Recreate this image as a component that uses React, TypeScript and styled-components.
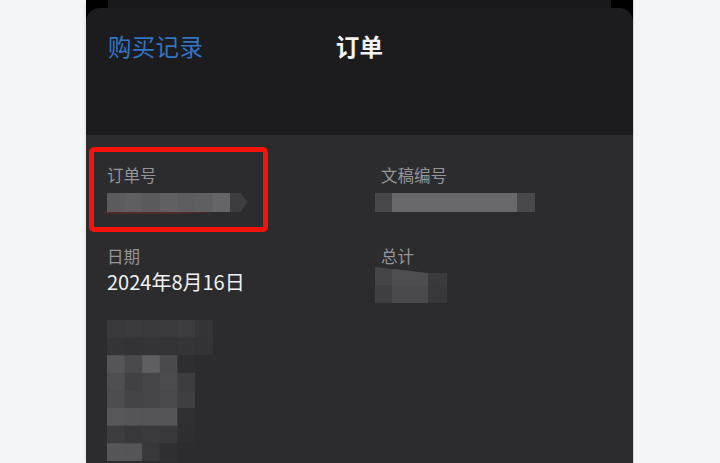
import React from "react";
import styled, { createGlobalStyle } from "styled-components";

const Global = createGlobalStyle`
  html, body { margin: 0; padding: 0; background: #f4f5f7; }
  body { font-family: "Noto Sans CJK SC", "Noto Sans", sans-serif; }
`;

const Page = styled.div`
  width: 720px;
  height: 463px;
  display: flex;
  background: #f4f5f7;
  overflow: hidden;
`;

const Phone = styled.div`
  margin-left: 86px;
  width: 547px;
  height: 463px;
  background: #000;
  display: flex;
  flex-direction: column;
  border-right: 1px solid #d6d7d9;
  box-shadow: -3px 0 3px -2px rgba(0, 0, 0, 0.08);
  overflow: hidden;
`;

const BackSheet = styled.div`
  flex-shrink: 0;
  height: 8px;
  margin: 0 22px;
  background: #19191b;
`;

const Sheet = styled.div`
  flex: 1;
  min-height: 0;
  display: flex;
  flex-direction: column;
  background: #1c1c1e;
  border-radius: 14px 14px 0 0;
  overflow: hidden;
`;

const Header = styled.div`
  flex-shrink: 0;
  height: 127px;
  display: flex;
  flex-direction: column;
`;

const NavBar = styled.div`
  height: 76px;
  display: grid;
  grid-template-columns: 1fr auto 1fr;
  align-items: center;
  padding: 0 22px;
`;

const BackLink = styled.span`
  font-size: 23.5px;
  color: #3274c6;
  letter-spacing: 0.3px;
  justify-self: start;
`;

const Title = styled.span`
  font-size: 23.5px;
  font-weight: 600;
  color: #f2f2f4;
  letter-spacing: 0.3px;
`;

const Content = styled.div`
  position: relative;
  flex: 1 0 auto;
  background: #2c2c2e;
  padding: 29px 21px 0;
`;

const Fields = styled.div`
  display: grid;
  grid-template-columns: 274px 1fr;
  row-gap: 31px;
`;

const Field = styled.div`
  display: flex;
  flex-direction: column;
`;

const Label = styled.span`
  font-size: 16.5px;
  line-height: 22px;
  color: #949499;
`;

const Value = styled.span`
  font-size: 20px;
  line-height: 28px;
  margin-top: 1px;
  color: #f2f2f4;
`;

const Mosaic = styled.svg<{ $shift?: number; $top?: number }>`
  display: block;
  flex-shrink: 0;
  margin-left: ${(p) => p.$shift ?? 0}px;
  margin-top: ${(p) => p.$top ?? 0}px;
`;

const Highlight = styled.div`
  position: absolute;
  left: 3px;
  top: 12px;
  width: 179px;
  height: 85px;
  box-sizing: border-box;
  border: 5px solid #f4140c;
  border-radius: 5px;
`;

const C = 17.6;

const orderCells = ["#5b5b5d", "#5f5f61", "#5a5a5c", "#616163", "#5d5d5f", "#5f5f61", "#656567"];

const OrderBar = () => (
  <Mosaic width={142} height={21} $shift={-2} $top={7}>
    <path d="M0 19.5 Q60 21 110 18" stroke="#7a2a2a" strokeWidth={2} fill="none" opacity={0.5} />
    {orderCells.map((c, i) => (
      <rect key={i} x={i * C + 2} y={0} width={C + 0.5} height={19} fill={c} />
    ))}
    <path d="M125 0 L136 0 L142 9 L136 19 L125 19 Z" fill="#3d3d40" />
  </Mosaic>
);

const DocBar = () => (
  <Mosaic width={160} height={19} $shift={-6} $top={7}>
    <rect x={0} y={0} width={18} height={19} fill="#48484b" />
    <rect x={17} y={0} width={126} height={19} fill="#69696b" />
    <rect x={142} y={0} width={18} height={19} fill="#49494c" />
  </Mosaic>
);

const TotalBlocks = () => (
  <Mosaic width={72} height={36} $shift={-6} $top={0}>
    <path d="M0 0 L36 4 L36 18 L0 18 Z" fill="#454548" />
    <path d="M17 2 L53 6 L53 18 L17 18 Z" fill="#4e4e51" />
    <rect x={53} y={6} width={19} height={12} fill="#3a3a3d" />
    <rect x={0} y={18} width={17} height={18} fill="#404043" />
    <rect x={17} y={18} width={36} height={18} fill="#4a4a4d" />
    <rect x={53} y={18} width={19} height={18} fill="#38383b" />
  </Mosaic>
);

const grid: string[][] = [
  ["#3a3a3d", "#3b3b3f", "#3a3a3e", "#3b3b3f", "#3c3c40", "#353538"],
  ["#353538", "#333336", "#343437", "#343437", "#353538", "#333336"],
  ["#565658", "#4a4a4d", "#5f5f61", "#4b4b4e", "#2e2e30", "#2c2c2e"],
  ["#4f4f52", "#414144", "#464649", "#4c4c4f", "#3d3d40", "#2c2c2e"],
  ["#4d4d50", "#444447", "#464649", "#4a4a4d", "#3f3f42", "#2c2c2e"],
  ["#58585a", "#555558", "#555558", "#555558", "#303033", "#2c2c2e"],
  ["#3d3d40", "#38383b", "#3b3b3e", "#39393c", "#2e2e30", "#2c2c2e"],
  ["#565659", "#555558", "#38383b", "#2f2f32", "#2c2c2e", "#2c2c2e"],
];

const BlurBlock = () => (
  <Mosaic width={C * 6} height={C * 8} $top={17}>
    {grid.map((row, r) =>
      row.map((c, i) => (
        <rect key={`${r}-${i}`} x={i * C} y={r * C} width={C + 0.5} height={C + 0.5} fill={c} />
      ))
    )}
  </Mosaic>
);

export default function App() {
  return (
    <>
      <Global />
      <Page>
        <Phone>
          <BackSheet />
          <Sheet>
            <Header>
              <NavBar>
                <BackLink>购买记录</BackLink>
                <Title>订单</Title>
                <span />
              </NavBar>
            </Header>
            <Content>
              <Fields>
                <Field>
                  <Label>订单号</Label>
                  <OrderBar />
                </Field>
                <Field>
                  <Label>文稿编号</Label>
                  <DocBar />
                </Field>
                <Field>
                  <Label>日期</Label>
                  <Value>2024年8月16日</Value>
                </Field>
                <Field>
                  <Label>总计</Label>
                  <TotalBlocks />
                </Field>
              </Fields>
              <BlurBlock />
              <Highlight />
            </Content>
          </Sheet>
        </Phone>
      </Page>
    </>
  );
}
